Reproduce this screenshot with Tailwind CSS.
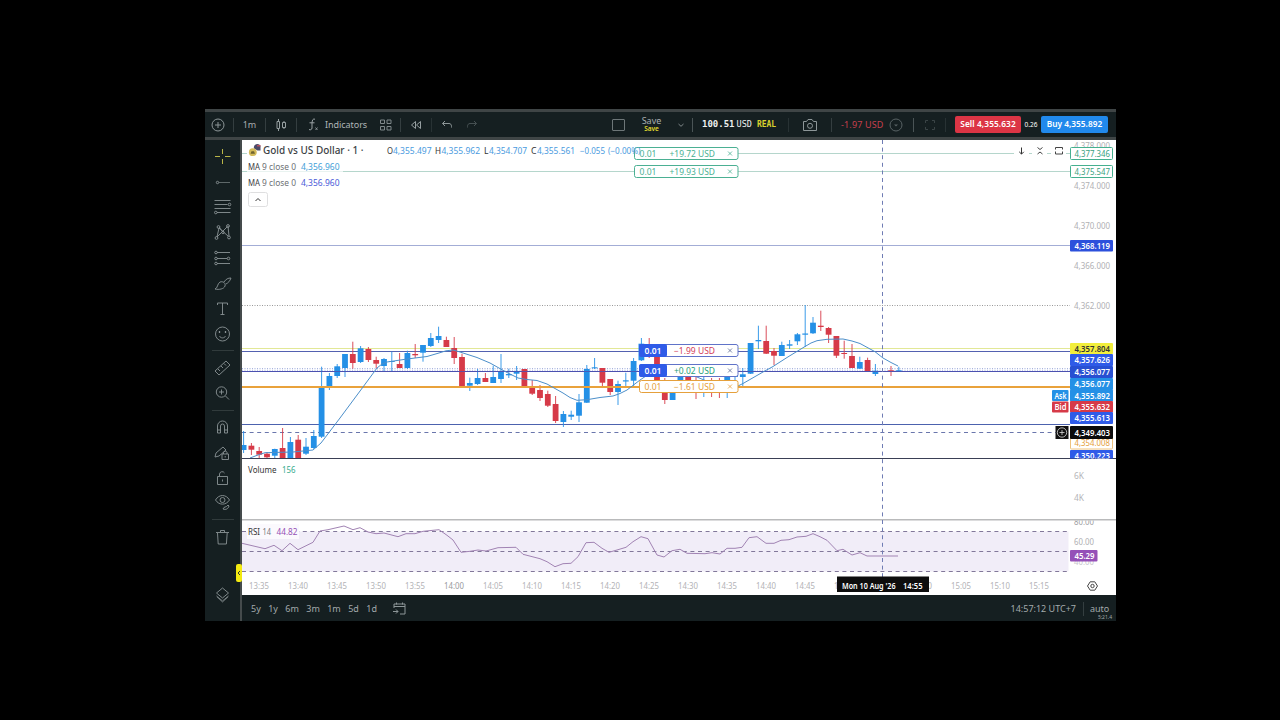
<!DOCTYPE html>
<html lang="en">
<head>
  <meta charset="UTF-8" />
  <meta name="viewport" content="width=device-width, initial-scale=1.0"/>
  <title>Gold vs US Dollar</title>
  <script src="https://cdn.jsdelivr.net/npm/@tailwindcss/browser@4"></script>
</head>
<body class="bg-black w-[1280px] h-[720px] overflow-hidden font-['Noto_Sans','Open_Sans',sans-serif] text-[#a9afb1]">
  <div class="ml-[205px] pt-[109px] w-[911px]">
    <div class="h-[512px] flex flex-col bg-[#151f21]">

      <!-- Top toolbar -->
      <header class="h-[31px] shrink-0 flex items-center border-t-[3px] border-b-[3px] border-[#3f4546] text-[9px] whitespace-nowrap">
        <div class="w-7 flex justify-center pr-[3px]">
          <svg class="w-[14px] h-[14px]" viewBox="0 0 14 14" fill="none" stroke="#8d9698"><circle cx="7" cy="7" r="6"/><path d="M7 4v6M4 7h6"/></svg>
        </div>
        <i class="w-px h-[14px] bg-[#343e40]"></i>
        <div class="w-[31px] text-center">1m</div>
        <i class="w-px h-[14px] bg-[#343e40]"></i>
        <div class="w-[30px] flex justify-center">
          <svg class="w-3 h-3" viewBox="0 0 12 12" fill="none" stroke="#969fa1"><path d="M3.500 0v2M3.500 10v2M2 2.500h2.500v7H2zM9 2v1.500M9 8.500V10M7.500 3.500h3v5h-3z"/></svg>
        </div>
        <i class="w-px h-[14px] bg-[#343e40]"></i>
        <div class="w-[28px] flex justify-end pr-[5px]">
          <svg class="w-[12px] h-[13px]" viewBox="0 0 12 13" fill="none" stroke="#9aa2a4"><path d="M7 1.200C5 .5 4.200 2 4 5v5c-.2 1.800-1.500 2.200-3 1.500M1.500 4.800h5"/><path d="M7.500 9.500l2 2.500M9.500 9.500l-2 2.500" stroke-width=".8"/></svg>
        </div>
        <div class="w-[46px] text-[#b0b6b8] tracking-[-0.05px]">Indicators</div>
        <div class="w-[29px] flex justify-center">
          <svg class="w-3 h-3" viewBox="0 0 12 12" fill="none" stroke="#7f888a"><path d="M.5 1h4v3.500h-4zM7 1h4v3.500H7zM.5 7.500h4V11h-4zM7 7.500h4V11H7z"/></svg>
        </div>
        <i class="w-px h-[14px] bg-[#343e40]"></i>
        <div class="w-[30px] flex justify-center">
          <svg class="w-3 h-3" viewBox="0 0 12 12" fill="none" stroke="#969fa1"><path d="M5.500 2.500v7L1.500 6zM10.500 2.500v7L6.500 6z"/></svg>
        </div>
        <i class="w-px h-[14px] bg-[#283234]"></i>
        <div class="w-[29px] flex justify-center">
          <svg class="w-3 h-3" viewBox="0 0 12 12" fill="none" stroke="#8d9698"><path d="M4 2L1.500 4.500 4 7M1.500 4.500H8c1.500 0 2.500 1 2.500 3v1"/></svg>
        </div>
        <div class="w-[22px] flex justify-center">
          <svg class="w-3 h-3" viewBox="0 0 12 12" fill="none" stroke="#465052"><path d="M8 2l2.500 2.500L8 7M10.500 4.500H4c-1.500 0-2.500 1-2.500 3v1"/></svg>
        </div>
        <div class="w-[158px] flex justify-end pr-[16px]">
          <div class="w-[13px] h-[12px] border border-[#6d7678] rounded-[1px] ml-auto"></div>
        </div>
        <div class="w-[21px] flex flex-col items-center leading-[8px]">
          <span class="text-[9px]">Save</span>
          <span class="text-[6.500px] font-semibold text-[#e3dc2e]">Save</span>
        </div>
        <div class="w-[30px] flex justify-center pl-2">
          <svg class="w-2 h-2" viewBox="0 0 8 8" fill="none" stroke="#7f888a"><path d="M1.500 3L4 5.300 6.500 3"/></svg>
        </div>
        <i class="w-px h-[14px] bg-[#4a5456]"></i>
        <div class="w-[95px] pl-[9px] flex items-center gap-[3px] text-[#eef0f0]">
          <b class="font-['DejaVu_Sans_Mono',monospace] text-[9px]">100.51</b>
          <span class="font-['DejaVu_Sans_Mono',monospace] text-[8.500px] -ml-px">USD</span>
          <span class="font-['DejaVu_Sans_Mono',monospace] font-bold text-[8px] text-[#d8d22e] pl-[2px]">REAL</span>
        </div>
        <i class="w-px h-[14px] bg-[#283234]"></i>
        <div class="w-[42px] flex justify-center">
          <svg class="w-[14px] h-3" viewBox="0 0 14 12" fill="none" stroke="#8d9698"><path d="M.5 2.500h3L5 .5h4l1.500 2h3v9H.5z"/><circle cx="7" cy="6.800" r="2.500"/></svg>
        </div>
        <i class="w-px h-[14px] bg-[#343e40]"></i>
        <div class="w-[52px] pl-[9px] text-[#c73f4d] tracking-[0.15px]">-1.97 USD</div>
        <div class="w-[29px] pl-[5px]">
          <svg class="w-[14px] h-[14px]" viewBox="0 0 14 14" fill="none" stroke="#586264"><circle cx="7" cy="7" r="6"/><path d="M5 6.500h4L7 8.500z" fill="#586264" stroke="none"/></svg>
        </div>
        <i class="w-px h-[14px] bg-[#4a5456]"></i>
        <div class="w-[31px] flex justify-center">
          <svg class="w-[10px] h-[10px]" viewBox="0 0 10 10" fill="none" stroke="#3a4446"><path d="M.5 3V.5H3M7 .5h2.500V3M9.500 7v2.500H7M3 9.500H.5V7"/></svg>
        </div>
        <i class="w-px h-[14px] bg-[#283234]"></i>
        <div class="flex items-center pl-[9px] text-[8.300px] font-semibold text-white">
          <div class="w-[66px] h-[17px] rounded-[2px] bg-[#dc3545] flex items-center justify-center tracking-[0.1px]">Sell 4,355.632</div>
          <div class="w-[20px] text-center text-[6.500px] font-normal">0.26</div>
          <div class="w-[67px] h-[17px] rounded-[2px] bg-[#2189ec] flex items-center justify-center">Buy 4,355.892</div>
        </div>
      </header>

      <div class="flex-1 flex min-h-0">
        <!-- Drawing tools -->
        <aside class="w-[37px] shrink-0 border-r-[2px] border-[#454b4c] relative">
          <svg class="w-[35px] h-[481px]" viewBox="205 140 35 481" fill="none" stroke="#8a9395" stroke-width="0.9">
            <path stroke="#b9b548" stroke-width="1" d="M222.500 149v5M222.500 159v5M215 156.500h5M225 156.500h5.500"/>
            <path stroke="#667072" d="M219 182.500h11"/><circle cx="217.500" cy="182.500" r="1.200"/>
            <path d="M214.500 200.500h16M214.500 204.500h13M214.500 208.500h16M217 212.500h13.500"/><circle cx="229.500" cy="204.500" r="1.300"/><circle cx="215.800" cy="212.500" r="1.300"/>
            <path d="M217 237l2-9M219 228l9 8M217 237l10-10M228 226l1 10M219 227l4 5"/><circle cx="216.500" cy="238" r="1.400"/><circle cx="218.500" cy="227" r="1.400"/><circle cx="228" cy="226" r="1.400"/><circle cx="229" cy="237.500" r="1.400"/><circle cx="223" cy="232.500" r="1.200"/>
            <path d="M217 252.500h13M217 258.500h10M217 263.500h13"/><circle cx="216" cy="252.500" r="1.300"/><circle cx="216" cy="258.500" r="1.300"/><circle cx="228.500" cy="258.500" r="1.300"/><circle cx="216" cy="263.500" r="1.300"/>
            <path d="M215 289c3-1 2-5 5-7 3-1 6 1 5 4-1 3-6 4-10 3zM224 282c2-3 4-4 7-4-1 3-3 5-5 6"/>
            <path d="M217.500 305v-2h10v2M222.500 303v11.500M220.500 314.500h4"/>
            <circle cx="222.500" cy="334" r="7"/><path d="M219.500 336c1 2.500 5 2.500 6 0"/><path d="M219.500 331v2M225.500 331v2" stroke-width="1.300"/>
            <path d="M212 350.500h22M212 410.500h22M212 519.500h22" stroke="#343e40"/>
            <path d="M215 371l11-10 4 4-11 10zM218 369l2 2M221 366l2 2M224 363.500l2 2"/>
            <circle cx="221.500" cy="392" r="5.200"/><path d="M225.500 396l3.500 3.500M219 392h5M221.500 389.500v5"/>
            <path d="M217.500 433v-7a5 5 0 0 1 10 0v7h-3v-7a2 2 0 0 0-4 0v7zM217.500 430h3M224.500 430h3"/>
            <path d="M215 457l1-4 7-6 3 3-7 6zM222 454h6.500v5.500H222zM223.500 454v-1.500a1.800 1.800 0 0 1 3.500 0v1.500M225.200 456v1.500"/>
            <path d="M217.500 476.500h10v8h-10zM219.500 476v-2a2.700 2.700 0 0 1 5-1M222.500 479.500v2"/>
            <path d="M215.500 500c3.500-6 10.500-6 14 0-3.500 5.500-10.500 5.500-14 0z"/><circle cx="222.500" cy="500" r="2.500"/><path d="M223 509c1-3 3-1 5-4l1 1c-1 3-3 4-6 3z"/>
            <path d="M216 532.500h13M220.500 532v-1.500h4v1.500M217.500 533l.7 11h8.200l.8-11"/>
            <path d="M216.500 593l6-5 6 5-6 5zM216.500 596l6 5 6-5"/><path d="M217 597l5.500 5 5.500-5" stroke="#6d7678"/>
          </svg>
          <div class="absolute left-[31px] top-[424px] w-[6px] h-[18px] rounded-[2px] bg-[#f3ea11] flex items-center justify-center">
            <svg class="w-1 h-[6px]" viewBox="0 0 4 6" fill="none" stroke="#333"><path d="M3 1L1 3l2 2"/></svg>
          </div>
        </aside>

        <main class="flex-1 flex flex-col">
          <svg id="chart" class="w-[874px] h-[455px] bg-white block" viewBox="242 140 874 455"></svg>

          <!-- Range bar -->
          <footer class="h-[26px] flex items-center text-[9px] text-[#a3aaac] pl-[9px] pt-px">
            <div class="w-[142px] flex items-center justify-between pr-[16px]">
              <span>5y</span><span>1y</span><span>6m</span><span>3m</span><span>1m</span><span>5d</span><span>1d</span>
            </div>
            <svg class="w-[13px] h-[13px]" viewBox="0 0 13 13" fill="none" stroke="#8d9698"><path d="M1 6V2h11v10H7M1 4.500h11M3.500 .5v2M9.500 .5v2M0 9.500h5M3 7.500l2 2-2 2"/></svg>
            <div class="ml-auto pr-[7px]">14:57:12 UTC+7</div>
            <i class="w-px h-[14px] bg-[#343e40]"></i>
            <div class="w-[32px] pl-[6px] relative">auto<span class="absolute right-[4px] top-[11px] text-[5px] leading-[8px]">5:21.4</span></div>
          </footer>
        </main>
      </div>
    </div>
  </div>

  <script>
    const chart = document.getElementById('chart');
    const BLUE = '#2490e6', RED = '#d63a48';
    let out = '';

    function line(x1, y1, x2, y2, color, w = 1, dash = '') {
      out += `<path d="M${x1} ${y1}L${x2} ${y2}" stroke="${color}" stroke-width="${w}" stroke-dasharray="${dash}" fill="none"/>`;
    }
    function rect(x, y, w, h, fill, stroke = 'none', r = 0) {
      out += `<rect x="${x}" y="${y}" width="${w}" height="${h}" rx="${r}" fill="${fill}" stroke="${stroke}"/>`;
    }
    function text(x, y, str, color, len, size = 8.5, weight = 400) {
      out += `<text x="${x}" y="${y}" fill="${color}" font-size="${size}" font-weight="${weight}" textLength="${len}" lengthAdjust="spacingAndGlyphs">${str}</text>`;
    }

    // price levels
    line(242, 153.5, 1070, 153.5, '#b5d6cc');
    line(242, 171.5, 1070, 171.5, '#b5d6cc');
    line(242, 245.5, 1070, 245.5, '#a3add6');
    line(242, 305.5, 1070, 305.5, '#999', 1, '1 1.5');
    line(242, 348.5, 1070, 348.5, '#e2e896');
    line(242, 351.5, 1070, 351.5, '#5361b0');
    line(242, 368.5, 1070, 368.5, '#a9b4de', 1, '1 1.5');
    line(242, 370.2, 1070, 370.2, '#a9b4de', 1, '1 1.5');
    line(242, 371.5, 1070, 371.5, '#4b50b0');
    line(242, 424.5, 1070, 424.5, '#4c62ae');
    line(242, 432.5, 1056, 432.5, '#6a76ac', 1, '4 3.6');

    // [up, high, bodyTop, bodyBottom, low]
    const candles = [
      [1,431,445,450,453],[0,443,445.7,449.7,455],[0,447,451,454.7,458],[0,452,453.7,457.3,458],[1,448.7,449,455.7,458],
      [0,428,448,458,458],[1,437,442,458,458],[0,435,439.7,458,458],[1,438,446.7,453.7,455],[1,430,436,448,449],
      [1,366.7,386.7,436.7,438],[1,373,376,386.7,390],[1,364,366.3,376,378],[1,354,354,368,377],[0,341.7,354,363,368.7],
      [1,346,348.3,362,363],[0,347,349,360,362],[0,356.7,360,363.7,368],[1,358,359,366,371],[1,351.7,361,362,371],
      [0,353,364,368,368],[1,350.7,353,368,369],[0,344,354,355.3,358],[1,345,345,352.7,361.7],[1,333,338,346,347],
      [1,326.7,336,340,343],[0,336.7,340,347,347],[0,337,348,358,364],[0,353.7,357,386.7,387],[1,377.7,383,385.7,391],
      [1,369,378,384,385],[0,373,378,382,382],[1,365.7,377,383,383],[1,354,372,379,383],[1,368.7,374,375.3,378],
      [1,366,371.3,373.7,380],[0,369,369,386.7,387],[0,380,387.3,393.7,395],[0,385,390,398,401],[0,390.7,394,405.7,407],
      [0,396,404,421,423],[1,411,414,422,427],[1,410.7,414.7,416.7,420],[1,394,402.3,415.7,422],[1,365,369,402.7,403],
      [1,358,367.3,368.3,369],[0,368,368,382.7,386],[0,379,379,392,395],[1,380.7,384,392,405],[1,372.7,380.3,381.5,387],
      [1,358,361,380.7,386],[1,338,343.7,360.3,361],[0,338,346,356,358],[0,350,355,381,388],[0,378,385,400,404],
      [1,385,392,400,400],[1,374,376,392,393],[0,374,376,388,390],[0,375,382,385,399],[1,376,384,386,397],
      [0,378,383,386,397],[0,378,384,386,398],[1,370,375,388,398],[1,368,373,377,386],[1,368,374.3,377,387],
      [1,343,343,373.7,374],[1,325.7,340,341.3,349],[0,325.7,341,353.7,354],[0,348,351,355.7,365],[1,341.7,345,356,356],
      [1,340,344.3,345.7,349],[1,333,334.3,341.3,345],[1,305,333.5,334.7,347],[1,317,322.7,333.3,334],[0,310.7,325.7,327,331],
      [0,327,328,334.7,343],[0,336,336,355.7,358],[0,340.7,353,354,358.7],[0,344,356,368,368],[1,356.7,362,368.7,369],
      [0,357.7,360,371,371],[1,364,370.7,374,376],null,[0,366,370.3,371.3,376],[1,366.7,370.3,371.7,372]
    ];
    candles.forEach((c, i) => {
      if (!c) return;
      const x = 243.6 + i * 7.8;
      const color = c[0] ? BLUE : RED;
      line(x, c[1], x, c[4], color, 0.9);
      rect(x - 2.9, c[2], 5.8, c[3] - c[2], color);
    });
    line(242, 387, 1070, 387, '#e9a23b', 2);
    line(242, 371.5, 1070, 371.5, '#4b50b0', 0.8);

    // moving average
    out += `<polyline fill="none" stroke="#4c8fca" stroke-width="1" points="250,458 258,455 265,452.7 293,452 313,450 321,443 340,418 363,387 377,368 382,364 387,362 407,359 427,356.500 440,352.700 446,350.800 453,350 460,352 477,357.500 490,363 507,372.500 518,378 527,379.500 537,380.500 547,384 563,393 570,397.500 577,400.300 587,399.700 600,397.500 613,396 620,393.500 627,390 640,380 652,372 664,369 680,370 697,377 704,380 720,386 738,386 743,383.500 763,372 773,366.500 787,357.500 805,346.500 811,343 817,340.700 827,339.300 843,339 852,341 860,343.500 875,351.700 883,358 891,362.500 898,366"/>`;

    line(242, 458.5, 1116, 458.5, '#3a3f55');

    // RSI pane
    rect(242, 531.5, 826.5, 40, '#f1edf8');
    rect(247, 524, 52, 15, '#fbf9fd');
    [531.5, 551.5, 571.5].forEach(y => line(242, y, 1068, y, '#82789a', 1, '4 3.6'));
    rect(247, 526, 52, 10, '#fbf9fd');
    line(242, 519.8, 1116, 519.8, '#b9babb', 1.6);
    const rsi = [
      [242,543.3],[265,548.7],[274,545.3],[282,550.7],[290,543.3],[298,549.7],[313,542.3],[320,531],[328,529.7],[344,526],
      [353,529.7],[360,527.7],[368,532],[376,533.7],[384,533],[398,536.7],[406,533.7],[415,533.7],[423,531.3],[439,529.7],
      [447,535.3],[453,540],[461,552.3],[470,551.3],[478,550],[486,551],[498,547.7],[516,547.3],[523,554.3],[540,558.7],
      [547,561.7],[555,566.7],[563,563.7],[571,563.3],[578,556.7],[586,542.7],[594,542.3],[602,548.3],[609,552.3],[618,549.7],
      [626,547.3],[633,541.7],[641,536.7],[648,538.7],[657,555],[664,557],[672,550.7],[680,549.3],[687,553.3],[705,553.7],
      [712,552.7],[720,554],[727,548.3],[735,548.3],[742,547.3],[749,537.7],[757,536.7],[766,543.3],[774,543.3],[781,540.3],
      [789,539.7],[797,537],[806,536.3],[813,533.7],[820,536.7],[827,540.3],[837,550.7],[843,549.3],[852,555],[860,552.7],
      [867,556],[898,556]
    ];
    out += `<polyline fill="none" stroke="#a183b3" stroke-width="1" points="${rsi.join(' ')}"/>`;

    // crosshair
    line(882.5, 140, 882.5, 577, '#6f7cb4', 1, '4 3.6');

    // legend
    rect(247, 144, 392, 14, '#fff');
    rect(247, 161, 96, 13, 'rgba(255,255,255,0.7)');
    out += '<path d="M254 148.500a3.500 3.500 0 0 1 6.500-2.500v4.500h-3z" fill="#4b4a68"/><path d="M257 145h3.500v1.500H257z" fill="#b4505e"/><circle cx="252.800" cy="152.200" r="3.900" fill="#d3ba59"/><path d="M250.500 153.700l1-2.500h2.500l1 2.500z" fill="#6f6330"/>';
    text(263, 154, 'Gold vs US Dollar · 1 ·', '#3c3f45', 100.5, 10.5, 500);
    text(387, 154, 'O', '#333', 6);   text(393, 154, '4,355.497', '#4a9be0', 38.5);
    text(435, 154, 'H', '#333', 6);   text(441.5, 154, '4,355.962', '#4a9be0', 38.5);
    text(484, 154, 'L', '#333', 4.5); text(489, 154, '4,354.707', '#4a9be0', 38);
    text(531, 154, 'C', '#333', 5.5); text(537, 154, '4,355.561', '#4a9be0', 38);
    text(580, 154, '−0.055', '#4a9be0', 25);
    text(248, 169.8, 'MA', '#3d4045', 12); text(262, 169.8, '9 close 0', '#6d7074', 34); text(301, 169.8, '4,356.960', '#3fa0d8', 38.5);
    text(248, 185.8, 'MA', '#3d4045', 12); text(262, 185.8, '9 close 0', '#6d7074', 34); text(301, 185.8, '4,356.960', '#4a5ad8', 38.5);
    rect(248.5, 192.5, 19, 14, '#fff', '#dfdfe0', 2);
    out += '<path d="M255.500 201l2.500-2.500 2.500 2.500" fill="none" stroke="#333"/>';
    text(248, 473, 'Volume', '#333', 28.5); text(282, 473, '156', '#35ab8c', 13.5);
    text(248, 534.5, 'RSI', '#333', 12); text(262.5, 534.5, '14', '#77797d', 8.5); text(276.5, 534.5, '44.82', '#9552b5', 21);

    // position and order tags
    function tag(x, y, amount, color, filled) {
      rect(x + 0.5, y - 5.5, 737.5 - x, 12, '#fff', color, 2);
      if (filled) rect(x, y - 6, 28, 13, '#2f5be8', 'none', 2);
      const side = filled === 'red' ? '#d3405a' : filled === 'green' ? '#27a078' : color;
      const left = x < 637 ? 639.5 : 644.5;
      const start = x < 637 ? 669.5 : 674;
      text(left, y + 3.5, '0.01', filled ? '#fff' : color, 17, 8.5, filled ? 600 : 400);
      text(start, y + 3.5, amount, side, 715 - start);
      out += `<path d="M728 ${y - 1.5}l4 4m0 -4l-4 4" stroke="${filled ? '#5d6b96' : color}" stroke-width="0.8"/>`;
    }
    tag(634, 153, '+19.72 USD', '#4bb093');
    text(608, 154, '(−0.00%)', '#4a9be0', 32.5);
    tag(634, 171, '+19.93 USD', '#4bb093');
    tag(639, 350, '−1.99 USD', '#6073c8', 'red');
    tag(639, 370, '+0.02 USD', '#6073c8', 'green');
    tag(639, 386, '−1.61 USD', '#e5a03c');

    // pane buttons
    [1014, 1032, 1051].forEach(x => rect(x, 144, 15, 14, '#fff'));
    out += '<path d="M1021.500 147.500v6.500M1019.200 151.800l2.300 2.300 2.300-2.300" fill="none" stroke="#333"/>';
    out += '<path d="M1037.500 147.500l2.500 2 2.500-2M1037.500 154l2.500-2 2.500 2" fill="none" stroke="#444"/>';
    out += '<path d="M1055.500 149.500v-2h7v2M1055.500 151.500v2.500h7v-2.500" fill="none" stroke="#444"/>';

    // price scale
    [['4,378.000',149],['4,374.000',189],['4,370.000',229],['4,366.000',269],['4,362.000',309]]
      .forEach(([s, y]) => text(1074, y, s, '#b0b0b3', 36));
    text(1074, 478.5, '6K', '#b5b5b8', 10);
    text(1074, 501, '4K', '#b5b5b8', 10);
    text(1074, 544.5, '60.00', '#b0b0b3', 20);
    out += '<svg x="1070" y="520.600" width="46" height="8" viewBox="1070 520.600 46 8">';
    text(1074, 524.5, '80.00', '#a0a0a3', 20);
    out += '</svg>';
    text(1074, 565, '40.00', '#c6c6cc', 20);

    function price(y, h, str, bg, fg = '#fff', stroke = 'none') {
      rect(stroke === 'none' ? 1070 : 1070.5, y, stroke === 'none' ? 43 : 42, h, bg, stroke, 1);
      text(1074.5, y + h / 2 + 3.1, str, fg, 35.5, 8.5, stroke === 'none' ? 600 : 400);
    }
    price(147.5, 12, '4,377.346', '#fff', '#3a9f80', '#45b08f');
    price(165.5, 12, '4,375.547', '#fff', '#3a9f80', '#45b08f');
    price(240, 11.5, '4,368.119', '#2c50dc');
    price(343, 11, '4,357.804', '#f2ee3c', '#333');
    price(354, 12, '4,357.626', '#2f5be8');
    price(366, 12, '4,356.077', '#2850d2');
    price(378, 12, '4,356.077', '#2490e6');
    price(389.5, 12, '4,355.892', '#2490e6');
    price(401, 11.5, '4,355.632', '#d63a48');
    price(412, 12, '4,355.613', '#2f5be8');
    rect(1052, 390, 16.5, 11, '#2490e6', 'none', 1); text(1054.5, 398.6, 'Ask', '#fff', 12, 8, 600);
    rect(1052, 401.5, 16.5, 11, '#d63a48', 'none', 1); text(1054.5, 410, 'Bid', '#fff', 12, 8, 600);
    price(437, 12, '4,354.008', '#fff', '#e5a03c', '#eec27e');
    out += '<svg x="1070" y="449.500" width="46" height="9" viewBox="1070 449.500 46 9">';
    price(450, 12, '4,350.223', '#2f5be8');
    out += '</svg>';
    rect(1055.5, 426, 13, 13, '#111'); price(426, 13, '4,349.403', '#0b0b0b');
    out += '<circle cx="1062" cy="432.500" r="4.700" fill="none" stroke="#ddd" stroke-width=".8"/><path d="M1059.500 432.500h5M1062 430v5" stroke="#ddd" stroke-width=".8"/>';
    rect(1070, 550, 27.5, 11.5, '#9550b8', 'none', 1);
    text(1074.5, 559, '45.29', '#fff', 20, 8.5, 600);

    // time scale, a label every five bars
    ['13:35','13:40','13:45','13:50','13:55','14:00','14:05','14:10','14:15','14:20','14:25','14:30','14:35','14:40','14:45','14:50','14:55','15:00','15:05','15:10','15:15']
      .forEach((s, i) => { if (i !== 16) text(249 + i * 39, 588.5, s, s === '14:00' ? '#999a9e' : '#b3b3b6', 20); });
    rect(837, 576.5, 92, 15.5, '#0d0d0d');
    text(842, 589, "Mon 10 Aug '26", '#fff', 53.5, 8, 600);
    text(903, 589, '14:55', '#fff', 19.5, 8, 600);
    out += '<path d="M1090.200 581.800h4.600l2.700 4.200-2.700 4.200h-4.600l-2.700-4.200z" fill="none" stroke="#444"/><circle cx="1092.500" cy="586" r="1.700" fill="none" stroke="#444"/>';

    chart.innerHTML = out;
  </script>
</body>
</html>
